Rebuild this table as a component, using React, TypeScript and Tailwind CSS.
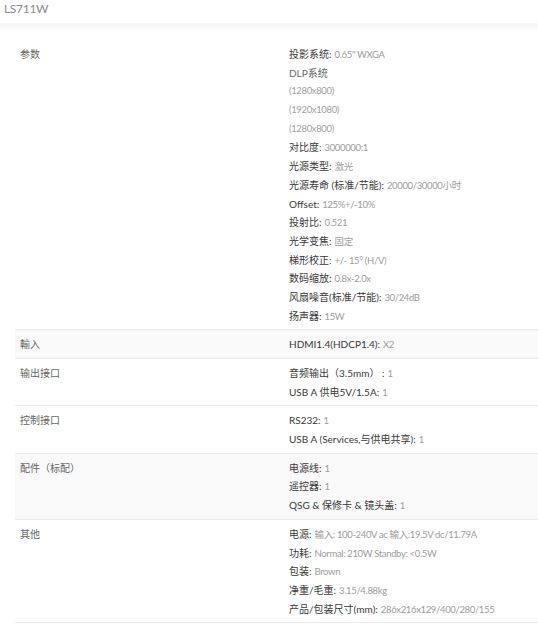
import React from "react";

type Line = { k?: string; v: string; tone?: "mid" | "light" };

interface SpecRow {
  label: string;
  lines: Line[];
  shaded?: boolean;
}

const rows: SpecRow[] = [
  {
    label: "参数",
    lines: [
      { k: "投影系统", v: "0.65\" WXGA" },
      { v: "DLP系统", tone: "mid" },
      { v: "(1280x800)" },
      { v: "(1920x1080)" },
      { v: "(1280x800)" },
      { k: "对比度", v: "3000000:1" },
      { k: "光源类型", v: "激光" },
      { k: "光源寿命 (标准/节能)", v: "20000/30000小时" },
      { k: "Offset", v: "125%+/-10%" },
      { k: "投射比", v: "0.521" },
      { k: "光学变焦", v: "固定" },
      { k: "梯形校正", v: "+/- 15° (H/V)" },
      { k: "数码缩放", v: "0.8x-2.0x" },
      { k: "风扇噪音(标准/节能)", v: "30/24dB" },
      { k: "扬声器", v: "15W" },
    ],
  },
  {
    label: "輸入",
    shaded: true,
    lines: [{ k: "HDMI1.4(HDCP1.4)", v: "X2" }],
  },
  {
    label: "输出接口",
    lines: [
      { k: "音频输出（3.5mm）", v: "1" },
      { k: "USB A 供电5V/1.5A", v: "1" },
    ],
  },
  {
    label: "控制接口",
    lines: [
      { k: "RS232", v: "1" },
      { k: "USB A (Services,与供电共享)", v: "1" },
    ],
  },
  {
    label: "配件（标配）",
    shaded: true,
    lines: [
      { k: "电源线", v: "1" },
      { k: "遥控器", v: "1" },
      { k: "QSG & 保修卡 & 镜头盖", v: "1" },
    ],
  },
  {
    label: "其他",
    lines: [
      { k: "电源", v: "输入: 100-240V ac 输入:19.5V dc/11.79A" },
      { k: "功耗", v: "Normal: 210W Standby: <0.5W" },
      { k: "包装", v: "Brown" },
      { k: "净重/毛重", v: "3.15/4.88kg" },
      { k: "产品/包装尺寸(mm)", v: "286x216x129/400/280/155" },
    ],
  },
];

// values render smaller and tighter than the keys in the source page
const valueCls = "text-[9.5px] tracking-[-0.35px] text-[#9c9c9c] whitespace-pre";

function SpecLine({ line }: { line: Line }) {
  if (!line.k) {
    return (
      <div className="flex items-baseline h-[18.7px]">
        <span
          className={
            line.tone === "mid"
              ? "text-[#686868]"
              : "text-[9.5px] tracking-[-0.35px] text-[#a0a0a0]"
          }
        >
          {line.v}
        </span>
      </div>
    );
  }
  const sep = line.k.endsWith("）") ? " :" : ":";
  return (
    <div className="flex items-baseline h-[18.7px] gap-[3px]">
      <span className="text-[#383838] whitespace-pre">
        {line.k}
        {sep}
      </span>
      <span className={valueCls}>{line.v}</span>
    </div>
  );
}

export default function App() {
  return (
    <div
      className="w-[538px] h-[624px] bg-white overflow-hidden"
      style={{ fontFamily: 'Lato, "Noto Sans CJK SC", sans-serif' }}
    >
      <div className="h-[23px] pl-[4px] pt-[1px] text-[12px] leading-[16px] tracking-[-0.3px] text-[#8a8a8a]">
        LS711W
      </div>
      <div className="h-[10px] bg-gradient-to-b from-[#f5f5f5] to-white" />
      <div className="h-[7px]" />

      <div className="ml-[15px] text-[10px] leading-[18.7px]">
        {rows.map((row, i) => (
          <div
            key={row.label}
            className={`grid grid-cols-[274px_1fr] pt-[5px] pb-[4px] ${
              i > 0 ? "border-t border-[#ebebeb]" : ""
            } ${row.shaded ? "bg-[#f9f9f9]" : "bg-white"}`}
          >
            <div className="pl-[5px] text-[#666]">{row.label}</div>
            <div>
              {row.lines.map((l, j) => (
                <SpecLine key={j} line={l} />
              ))}
            </div>
          </div>
        ))}
        <div className="border-t border-[#ebebeb]" />
      </div>
    </div>
  );
}
